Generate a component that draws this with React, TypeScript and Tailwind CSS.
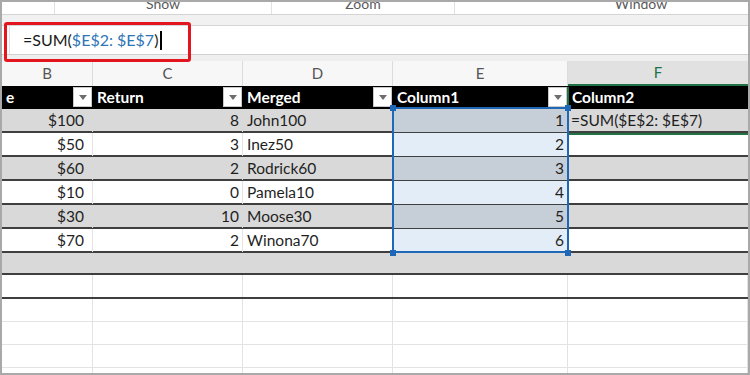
import React from 'react'

const cols = [91, 150, 150, 175, 180]
const grid = 'grid grid-cols-[91px_150px_150px_175px_180px]'

const rows = [
  { price: '$100', ret: '8', name: 'John100', n: '1' },
  { price: '$50', ret: '3', name: 'Inez50', n: '2' },
  { price: '$60', ret: '2', name: 'Rodrick60', n: '3' },
  { price: '$10', ret: '0', name: 'Pamela10', n: '4' },
  { price: '$30', ret: '10', name: 'Moose30', n: '5' },
  { price: '$70', ret: '2', name: 'Winona70', n: '6' },
]

function FilterButton() {
  return (
    <div className="absolute right-[1px] top-[1px] w-[19px] h-[20px] bg-white border border-[#c8c8c8] flex items-center justify-center">
      <div className="w-0 h-0 border-l-[4px] border-r-[4px] border-t-[5px] border-l-transparent border-r-transparent border-t-[#6d6d6d]" />
    </div>
  )
}

function HeaderCell({ label, filter }: { label: string; filter?: boolean }) {
  return (
    <div className="relative h-full flex items-center pl-[4px] font-bold text-white">
      {label}
      {filter && <FilterButton />}
    </div>
  )
}

export default function App() {
  return (
    <div
      className="relative w-[750px] h-[375px] overflow-hidden bg-white border-2 border-[#a9a9a9] text-[15.5px] text-[#1f1f1f]"
      style={{ fontFamily: 'Lato, "Open Sans", sans-serif' }}
    >
      {/* ribbon group labels, cut off at the top like the screenshot */}
      <div className="flex h-[12px] overflow-hidden text-[14px] text-[#5a5a5a] border-b border-[#d4d4d4] box-content">
        <div className="w-[53px] shrink-0 border-r border-[#e2e2e2]" />
        <div className="w-[217px] shrink-0 border-r border-[#e2e2e2] text-center -mt-[9px]">Show</div>
        <div className="w-[183px] shrink-0 border-r border-[#e2e2e2] text-center -mt-[9px]">Zoom</div>
        <div className="w-[372px] shrink-0 text-center -mt-[9px]">Window</div>
      </div>
      <div className="h-[10px] bg-[#f1f1f1] border-b border-[#d6d6d6] box-content" />

      {/* formula bar */}
      <div className="h-[28px] flex border-b border-[#d0d0d0] box-content">
        <div className="w-[8px] border-r border-[#e0e0e0]" />
        <div className="flex items-center pl-[13px] text-[16px] text-[#1a1a1a]">
          =SUM(<span className="text-[#2e75b6]">$E$2: $E$7</span>)
          <span className="inline-block w-[1.5px] h-[19px] bg-black ml-[2px]" />
        </div>
      </div>
      <div className="h-[6px] bg-[#efefef]" />

      {/* column letters */}
      <div className={`${grid} h-[25px] bg-[#f7f7f7] text-[15px] text-[#555]`}>
        {['B', 'C', 'D', 'E'].map((c) => (
          <div key={c} className="flex items-center justify-center border-r border-[#dcdcdc]">
            {c}
          </div>
        ))}
        <div className="flex items-center justify-center bg-[#e1e1e1] text-[#217346] border-b-2 border-[#217346]">
          F
        </div>
      </div>

      {/* table header */}
      <div className={`${grid} h-[23px] bg-black`}>
        <HeaderCell label="e" filter />
        <HeaderCell label="Return" filter />
        <HeaderCell label="Merged" filter />
        <HeaderCell label="Column1" filter />
        <div className="h-full flex items-center pl-[4px] font-bold text-white">Column2</div>
      </div>

      {/* data rows */}
      {rows.map((r, i) => {
        const shaded = i % 2 === 0
        const bg = shaded ? 'bg-[#d9d9d9]' : 'bg-white'
        const line = shaded ? 'border-[#d9d9d9]' : 'border-[#e3e3e3]'
        return (
          <div key={r.name} className={`${grid} h-[24px] border-b-2 border-[#3f3f3f] ${bg}`}>
            <div className={`flex items-center justify-end pr-[8px] border-r ${line}`}>{r.price}</div>
            <div className={`flex items-center justify-end pr-[3px] border-r ${line}`}>{r.ret}</div>
            <div className={`flex items-center pl-[4px] border-r ${line}`}>{r.name}</div>
            <div
              className={`flex items-center justify-end pr-[4px] ${shaded ? 'bg-[#c6ced8]' : 'bg-[#e3edf7]'}`}
            >
              {r.n}
            </div>
            <div className="flex items-center pl-[3px]">{i === 0 && '=SUM($E$2: $E$7)'}</div>
          </div>
        )
      })}

      {/* total row and empty grid below the table */}
      <div className="h-[22px] bg-[#d9d9d9] border-b-2 border-[#3f3f3f]" />
      <div className={`${grid} h-[24px] border-b-2 border-[#3f3f3f]`}>
        {cols.map((w, i) => (
          <div key={w + '-' + i} className="border-r border-[#e3e3e3]" />
        ))}
      </div>
      {[0, 1, 2, 3].map((k) => (
        <div key={k} className={`${grid} h-[23px] border-b border-[#e3e3e3]`}>
          {cols.map((w, i) => (
            <div key={w + '-' + i} className="border-r border-[#e3e3e3]" />
          ))}
        </div>
      ))}

      {/* red highlight around the formula */}
      <div className="absolute left-[2px] top-[20px] w-[187px] h-[40px] border-[3px] border-[#e3161f] rounded-[3px]" />

      {/* active cell F2 outline */}
      <div className="absolute left-[565px] top-[85px] w-[2px] h-[48px] bg-[#217346]" />
      <div className="absolute left-[565px] top-[131px] w-[182px] h-[2px] bg-[#217346]" />

      {/* selection E2:E7 */}
      <div className="absolute left-[390px] top-[105px] w-[177px] h-[146px] border-2 border-[#1f68b8]" />
      <div className="absolute left-[388px] top-[103px] w-[6px] h-[6px] bg-[#1f68b8]" />
      <div className="absolute left-[563px] top-[103px] w-[6px] h-[6px] bg-[#1f68b8]" />
      <div className="absolute left-[388px] top-[248px] w-[6px] h-[6px] bg-[#1f68b8]" />
      <div className="absolute left-[563px] top-[248px] w-[6px] h-[6px] bg-[#1f68b8]" />
    </div>
  )
}
